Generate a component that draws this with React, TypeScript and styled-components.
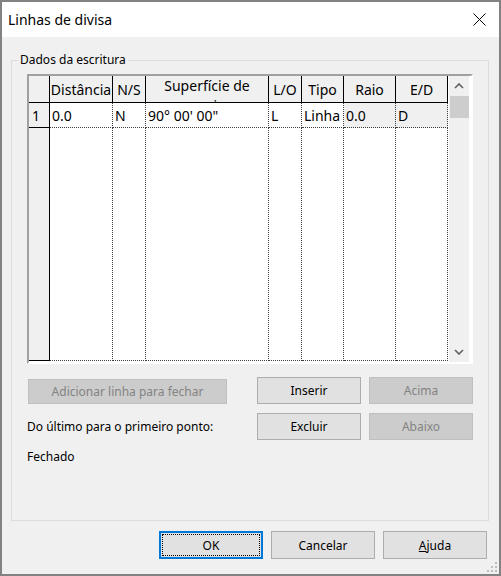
import React from "react";
import styled, { createGlobalStyle, css } from "styled-components";

const Global = createGlobalStyle`
  html, body { margin: 0; padding: 0; background: #ffffff; }
  body { font-family: "Noto Sans", sans-serif; }
  * { box-sizing: border-box; }
`;

const Window = styled.div`
  position: relative;
  width: 501px;
  height: 576px;
  border: 2px solid #828282;
  display: flex;
  flex-direction: column;
  background: #f0f0f0;
  font-family: "Noto Sans", sans-serif;
  font-size: 12px;
  color: #000;
`;

const TitleBar = styled.div`
  flex-shrink: 0;
  height: 35px;
  background: #ffffff;
  display: flex;
  align-items: center;
  justify-content: space-between;
  padding-left: 6px;
`;

const Title = styled.div`
  font-size: 14px;
  line-height: 18px;
`;

const CloseButton = styled.div`
  width: 40px;
  height: 35px;
  display: flex;
  align-items: center;
  justify-content: center;
`;

const Body = styled.div`
  flex: 1;
  min-height: 0;
  display: flex;
  flex-direction: column;
  padding: 15px 12px 15px 9px;
`;

const GroupBox = styled.fieldset`
  flex: 1;
  min-height: 0;
  width: 477px;
  margin: 0;
  border: 1px solid #dcdcdc;
  padding: 6px 15px 0 15px;
`;

const Legend = styled.legend`
  margin-left: -9px;
  padding: 0 2px;
  line-height: 16px;
  font-size: 12px;
`;

const DataGrid = styled.div`
  height: 290px;
  border: 2px solid;
  border-color: #a0a0a0 #ffffff #ffffff #a0a0a0;
  background: #ffffff;
  display: flex;
  font-size: 14px;
`;

const Table = styled.div`
  width: 420px;
  display: grid;
  grid-template-columns: 21px 63px 33px 123px 33px 42px 52px 52px;
  grid-template-rows: 27px 25px 233px;
  align-content: start;
`;

const HeadCell = styled.div<{ $wrap?: boolean }>`
  background: #f0f0f0;
  border-right: 1px solid #000;
  border-bottom: 1px solid #000;
  overflow: hidden;
  display: flex;
  justify-content: center;
  text-align: center;
  ${(p) =>
    p.$wrap
      ? css`
          align-items: flex-start;
          line-height: 20px;
          white-space: normal;
          margin-top: 0;
        `
      : css`
          align-items: center;
          line-height: 19px;
          white-space: nowrap;
        `}
`;

const RowHeadCell = styled.div`
  background: #f0f0f0;
  border-right: 1px solid #000;
  border-bottom: 1px solid #000;
  padding-left: 3px;
  display: flex;
  align-items: center;
  line-height: 19px;
`;

const DataCell = styled.div<{ $gray?: boolean }>`
  background: ${(p) => (p.$gray ? "#f0f0f0" : "#ffffff")};
  border-right: 1px dotted #3c3c3c;
  border-bottom: 1px dotted #3c3c3c;
  padding-left: 2px;
  display: flex;
  align-items: center;
  white-space: nowrap;
  overflow: hidden;
  line-height: 19px;
`;

const ScrollBar = styled.div`
  width: 20px;
  background: #f0f0f0;
  display: flex;
  flex-direction: column;
`;

const ScrollArrow = styled.div`
  height: 20px;
  display: flex;
  align-items: center;
  justify-content: center;
`;

const ScrollThumb = styled.div`
  height: 22px;
  width: 19px;
  margin-left: 1px;
  background: #cdcdcd;
`;

const ScrollTrack = styled.div`
  flex: 1;
`;

const Controls = styled.div`
  margin-top: 13px;
  display: grid;
  grid-template-columns: 222px 104px 104px;
  grid-template-rows: 27px 27px auto;
  column-gap: 8px;
  row-gap: 9px;
`;

const Button = styled.button<{ $disabled?: boolean; $default?: boolean; $wide?: boolean }>`
  font-family: "Noto Sans", sans-serif;
  font-size: 12px;
  color: #000;
  height: 27px;
  width: 104px;
  padding: 0;
  margin: 0;
  background: #e1e1e1;
  border: 1px solid #adadad;
  display: flex;
  align-items: center;
  justify-content: center;
  ${(p) =>
    p.$disabled &&
    css`
      background: #cccccc;
      border-color: #bfbfbf;
      color: #838383;
    `}
  ${(p) =>
    p.$wide &&
    css`
      width: 199px;
      height: 25px;
      margin-left: 1px;
      align-self: end;
    `}
  ${(p) =>
    p.$default &&
    css`
      border-color: #0078d7;
      box-shadow: inset 0 0 0 1px #0078d7;
      outline: 1px dotted #000;
      outline-offset: -4px;
    `}
`;

const InfoText = styled.div<{ $row: number }>`
  grid-column: 1;
  grid-row: ${(p) => p.$row};
  align-self: center;
  line-height: 16px;
`;

const ButtonRow = styled.div`
  margin-top: 10px;
  display: flex;
  justify-content: flex-end;
  gap: 8px;
  & > button {
    height: 28px;
  }
`;

const SizeGrip = styled.svg`
  position: absolute;
  right: 1px;
  bottom: 1px;
`;

const Chevron = ({ up }: { up?: boolean }) => (
  <svg width="10" height="6" viewBox="0 0 10 6">
    <polyline
      points={up ? "1,5 5,1 9,5" : "1,1 5,5 9,1"}
      fill="none"
      stroke="#606060"
      strokeWidth="1.6"
    />
  </svg>
);

const columns = ["Distância", "N/S", "Superfície de apoio", "L/O", "Tipo", "Raio", "E/D"];
const row = [
  { v: "0.0" },
  { v: "N" },
  { v: "90° 00' 00\"" },
  { v: "L" },
  { v: "Linha" },
  { v: "0.0", gray: true },
  { v: "D", gray: true },
];

export default function App() {
  return (
    <>
      <Global />
      <Window>
        <TitleBar>
          <Title>Linhas de divisa</Title>
          <CloseButton>
            <svg width="13" height="13" viewBox="0 0 13 13">
              <line x1="0.5" y1="0.5" x2="12.5" y2="12.5" stroke="#000" strokeWidth="1" />
              <line x1="12.5" y1="0.5" x2="0.5" y2="12.5" stroke="#000" strokeWidth="1" />
            </svg>
          </CloseButton>
        </TitleBar>
        <Body>
          <GroupBox>
            <Legend>Dados da escritura</Legend>
            <DataGrid>
              <Table>
                <HeadCell />
                {columns.map((c) => (
                  <HeadCell key={c} $wrap={c.length > 12}>
                    {c}
                  </HeadCell>
                ))}
                <RowHeadCell>1</RowHeadCell>
                {row.map((c, i) => (
                  <DataCell key={i} $gray={c.gray}>
                    {c.v}
                  </DataCell>
                ))}
                <RowHeadCell />
                {columns.map((c) => (
                  <DataCell key={"f" + c} />
                ))}
              </Table>
              <ScrollBar>
                <ScrollArrow>
                  <Chevron up />
                </ScrollArrow>
                <ScrollThumb />
                <ScrollTrack />
                <ScrollArrow>
                  <Chevron />
                </ScrollArrow>
              </ScrollBar>
            </DataGrid>
            <Controls>
              <Button $disabled $wide>
                Adicionar linha para fechar
              </Button>
              <Button>Inserir</Button>
              <Button $disabled>Acima</Button>
              <InfoText $row={2}>Do último para o primeiro ponto:</InfoText>
              <Button>Excluir</Button>
              <Button $disabled>Abaixo</Button>
              <InfoText $row={3}>Fechado</InfoText>
            </Controls>
          </GroupBox>
          <ButtonRow>
            <Button $default>OK</Button>
            <Button>Cancelar</Button>
            <Button>
              <u>A</u>juda
            </Button>
          </ButtonRow>
        </Body>
        <SizeGrip width="11" height="11" viewBox="0 0 11 11">
          <g fill="#bcbcbc">
            <rect x="8" y="0" width="2" height="2" />
            <rect x="4" y="4" width="2" height="2" />
            <rect x="8" y="4" width="2" height="2" />
            <rect x="0" y="8" width="2" height="2" />
            <rect x="4" y="8" width="2" height="2" />
            <rect x="8" y="8" width="2" height="2" />
          </g>
        </SizeGrip>
      </Window>
    </>
  );
}
